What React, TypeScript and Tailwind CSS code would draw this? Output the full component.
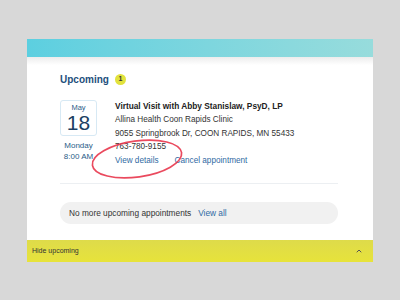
import { ChevronUp } from "lucide-react";

export default function App() {
  return (
    <div className="w-[400px] h-[300px] bg-[#d8d8d8] pt-[39px] px-[27px] font-['Liberation_Sans',Arial,sans-serif] overflow-hidden">
      <div className="relative w-[346px] flex flex-col">
        {/* cyan header */}
        <div className="h-[18px] bg-gradient-to-r from-[#5ccfe0] to-[#97dcdc]" />

        {/* body */}
        <div className="bg-gradient-to-b from-[#ececec] via-white to-white bg-[length:100%_16px] bg-no-repeat bg-white pl-[33px] pr-[35px] pt-[16px] pb-[16px]">
          <div className="flex items-center gap-[6px] h-[12px]">
            <span className="text-[10px] font-bold text-[#1d4f7c]">Upcoming</span>
            <span className="w-[11px] h-[11px] rounded-full bg-[#e2e23c] flex items-center justify-center text-[7px] font-bold text-[#333]">
              1
            </span>
          </div>

          <div className="flex mt-[15px] pb-[16px] border-b border-[#eceff2]">
            <div className="w-[37px] flex flex-col items-center">
              <div className="w-[37px] h-[36px] border border-[#d7e9f4] rounded-[3px] flex flex-col items-center pt-[2px]">
                <span className="text-[7.5px] text-[#2b5d88] leading-[10px]">May</span>
                <span className="text-[21px] text-[#1c3f63] leading-[20px]">18</span>
              </div>
              <span className="text-[8px] text-[#2b5d88] leading-[10px] mt-[5px]">Monday</span>
              <span className="text-[8px] text-[#2b5d88] leading-[11px] whitespace-nowrap">8:00 AM</span>
            </div>

            <div className="ml-[18px] flex flex-col text-[8.2px] text-[#333] leading-[13.6px]">
              <span className="font-bold text-[8.3px] text-[#222] leading-[13px]">
                Virtual Visit with Abby Stanislaw, PsyD, LP
              </span>
              <span>Allina Health Coon Rapids Clinic</span>
              <span>9055 Springbrook Dr, COON RAPIDS, MN 55433</span>
              <span>763-780-9155</span>
              <div className="flex gap-[16px] text-[#2f6aa3]">
                <span>View details</span>
                <span>Cancel appointment</span>
              </div>
            </div>
          </div>

          <div className="mt-[18px] h-[22px] rounded-full bg-[#f1f1f1] flex items-center pl-[9px] text-[8.3px]">
            <span className="text-[#333]">No more upcoming appointments</span>
            <span className="ml-[7px] text-[#2f6aa3]">View all</span>
          </div>
        </div>

        {/* yellow footer */}
        <div className="h-[22px] bg-gradient-to-b from-[#dedb4a] to-[#e7e33a] flex items-center justify-between pl-[5px] pr-[10px]">
          <span className="text-[7px] text-[#333]">Hide upcoming</span>
          <ChevronUp className="w-[8px] h-[8px] text-[#555]" strokeWidth={3} />
        </div>

        {/* red annotation ellipse */}
        <svg
          className="absolute left-[61px] top-[96px] pointer-events-none"
          width="98"
          height="48"
          viewBox="0 0 98 48"
        >
          <ellipse
            cx="49"
            cy="24"
            rx="45"
            ry="18"
            transform="rotate(-8 49 24)"
            fill="none"
            stroke="#e8364d"
            strokeWidth="1.7"
            opacity="0.9"
          />
        </svg>
      </div>
    </div>
  );
}
